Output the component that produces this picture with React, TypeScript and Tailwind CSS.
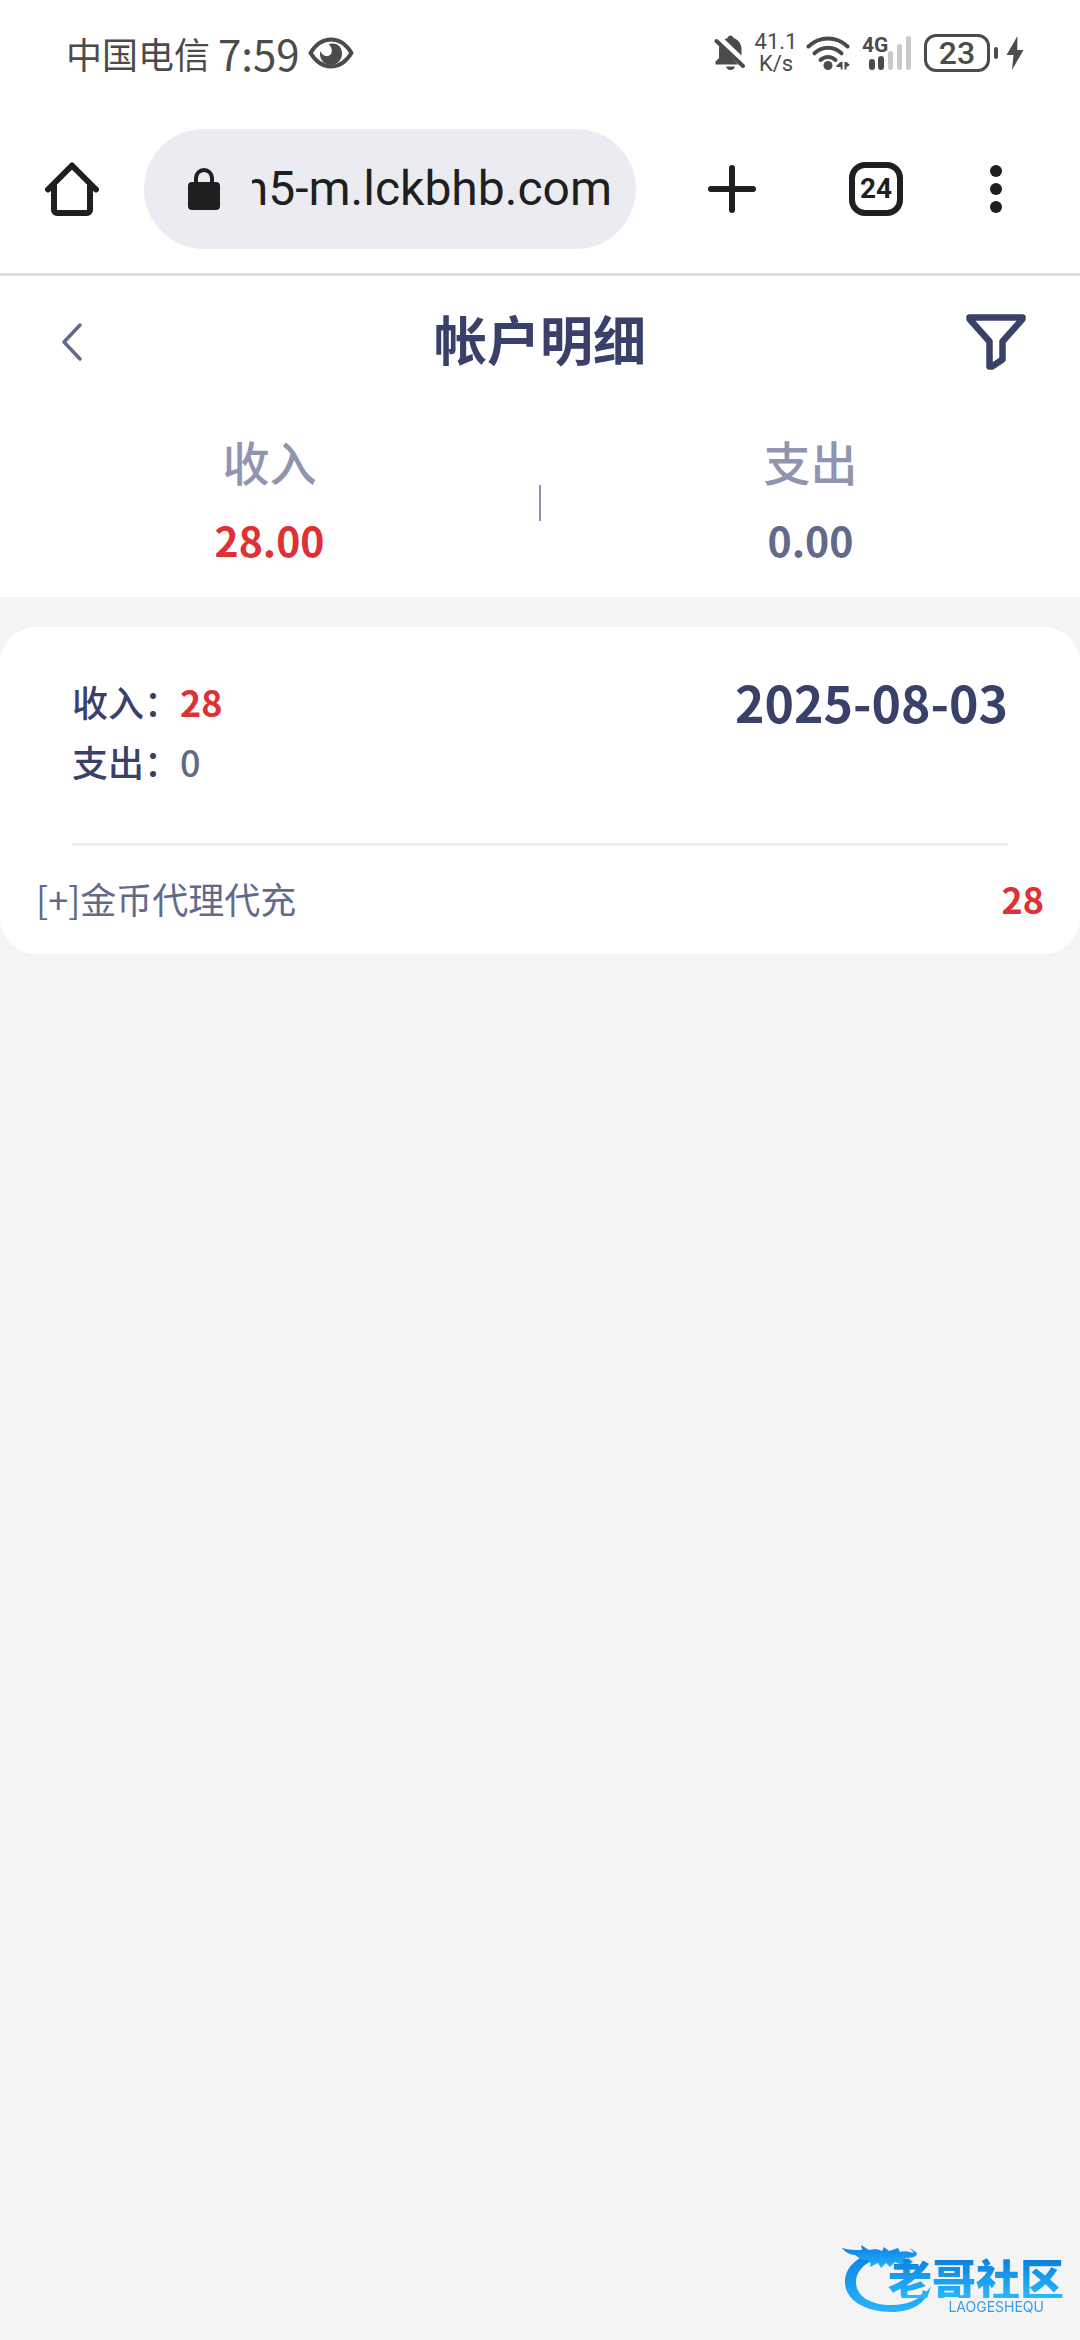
import React from "react";

interface ITotal {
  label: string;
  value: string;
  color: string;
}

interface IRecord {
  title: string;
  amount: string;
}

interface IDay {
  date: string;
  income: string;
  expense: string;
  records: IRecord[];
}

const totals: ITotal[] = [
  { label: "收入", value: "28.00", color: "text-[#df3033]" },
  { label: "支出", value: "0.00", color: "text-[#626a8b]" },
];

const days: IDay[] = [
  {
    date: "2025-08-03",
    income: "28",
    expense: "0",
    records: [{ title: "[+]金币代理代充", amount: "28" }],
  },
];

const EyeIcon = () => (
  <svg width="46" height="32" viewBox="0 0 46 32" fill="none">
    <path
      d="M2.500 16C8 7 15 2.500 23 2.500S38 7 43.500 16C38 25 31 29.500 23 29.500S8 25 2.500 16Z"
      stroke="currentColor"
      strokeWidth="4"
      strokeLinejoin="round"
    />
    <path
      d="M20.500 7.500C28 4.500 34 9.500 34 16.500c0 6.500-5 11.500-11 11.500s-11-4.500-11-11c0-1 .1-2 .4-3 1.500 4 5 6.200 8.300 4.800 4.300-1.800 4.300-8.300-.2-11.300Z"
      fill="currentColor"
    />
  </svg>
);

const MutedIcon = () => (
  <svg width="32" height="36" viewBox="0 0 32 36" fill="none">
    <path
      d="M10.500 4.200 13.500 3c.5-1.500 1.500-2.500 3-2.500s2.500 1 3 2.500c5 1.500 8 6 8 11v6.500L10.500 4.200Z"
      fill="currentColor"
    />
    <path
      d="M5.500 9.500 24 29.500H1.500v-3L5 23V15c0-2 .1-3.800.5-5.500Z"
      fill="currentColor"
    />
    <path d="M12 31.500h9c-.8 2.400-2.400 3.500-4.500 3.500s-3.700-1.100-4.500-3.500Z" fill="currentColor" />
    <path d="M2.500 6 29 31" stroke="currentColor" strokeWidth="4" strokeLinecap="round" />
  </svg>
);

const WifiIcon = () => (
  <svg width="44" height="36" viewBox="0 0 44 36" fill="none">
    <g stroke="currentColor" strokeWidth="4" strokeLinecap="round">
      <path d="M2.500 11.500C13.500.8 30.500.8 41.500 11.500" />
      <path d="M8.500 18.300c7.800-7.400 19.200-7.400 27 0" />
      <path d="M14.500 25c4.400-4 10.600-4 15 0" />
    </g>
    <circle cx="22" cy="30.500" r="4.500" fill="currentColor" />
    <path d="M36.500 27v7.500h-1.800V32H30.500v-1.500l4-3.500h2ZM38.500 27h2l3.500 3-3.500 2v2.500h-2V27Z" fill="currentColor" />
  </svg>
);

const SignalIcon = () => (
  <svg width="50" height="36" viewBox="0 0 50 36">
    <text
      x="0"
      y="17"
      fill="currentColor"
      className="font-['Roboto',sans-serif] text-[21px] font-bold"
    >
      4G
    </text>
    <rect x="7" y="24" width="6" height="11" rx="3" fill="currentColor" />
    <rect x="16" y="21" width="6" height="14" rx="3" fill="currentColor" />
    <g fill="#c9c9c9">
      <rect x="26" y="16" width="5" height="19" rx="2.500" />
      <rect x="35" y="9" width="5" height="26" rx="2.500" />
      <rect x="44" y="1" width="5" height="34" rx="2.500" />
    </g>
  </svg>
);

const BoltIcon = () => (
  <svg width="18" height="36" viewBox="0 0 18 36" fill="currentColor">
    <path d="M11.500 1 .5 20h7L6 35 17.500 15h-6.300L11.500 1Z" />
  </svg>
);

const StatusBar = () => (
  <div className="flex h-[105px] items-center justify-between pr-14 pl-[66px] text-[#4b4b4b]">
    <div className="flex items-center">
      <span className="text-[36px]">中国电信</span>
      <span className="ml-2 text-[42px]">7:59</span>
      <span className="ml-2">
        <EyeIcon />
      </span>
    </div>
    <div className="flex items-center">
      <MutedIcon />
      <div className="ml-2 flex w-11 flex-col items-center font-['Roboto',sans-serif] text-[22px] leading-[22px]">
        <span>41.1</span>
        <span>K/s</span>
      </div>
      <span className="ml-2">
        <WifiIcon />
      </span>
      <span className="ml-3">
        <SignalIcon />
      </span>
      <span className="ml-3 flex h-[38px] w-[66px] items-center justify-center rounded-xl border-3 border-current font-['Roboto',sans-serif] text-[32px] leading-8 font-medium">
        23
      </span>
      <span className="ml-1 h-3 w-1 rounded-sm bg-current" />
      <span className="ml-2">
        <BoltIcon />
      </span>
    </div>
  </div>
);

const BrowserBar = () => (
  <div className="flex h-[171px] items-center border-b-3 border-[#e0e0e0] text-[#1f1f1f]">
    <button type="button" aria-label="主页" className="flex w-36 justify-center">
      <svg width="54" height="54" viewBox="0 0 54 54" fill="none" stroke="currentColor" strokeWidth="6">
        <path d="M3 27.500 27 3.500l24 24" strokeLinecap="round" strokeLinejoin="round" />
        <path d="M9 23v25a3 3 0 0 0 3 3h30a3 3 0 0 0 3-3V23" />
      </svg>
    </button>
    <div className="flex h-[120px] min-w-0 flex-1 items-center rounded-full bg-[#ebecf1] pr-6 pl-11">
      <svg width="32" height="42" viewBox="0 0 32 42" className="shrink-0">
        <rect y="14" width="32" height="28" rx="4" fill="currentColor" />
        <path d="M8 16V10a8 8 0 0 1 16 0v6" fill="none" stroke="currentColor" strokeWidth="4" />
      </svg>
      {/* long hosts keep their end visible */}
      <div className="ml-8 flex min-w-0 flex-1 justify-end overflow-hidden font-['Roboto',sans-serif] text-[48px] leading-[72px] whitespace-nowrap">
        <span>h5-m.lckbhb.com</span>
      </div>
    </div>
    <button type="button" aria-label="新标签页" className="ml-6 flex w-36 justify-center">
      <svg width="48" height="48" viewBox="0 0 48 48" stroke="currentColor" strokeWidth="6" strokeLinecap="round">
        <path d="M24 3v42M3 24h42" />
      </svg>
    </button>
    <button type="button" className="flex w-36 justify-center">
      <span className="flex size-[54px] items-center justify-center rounded-2xl border-6 border-current font-['Roboto',sans-serif] text-[28px] leading-8 font-bold">
        24
      </span>
    </button>
    <button type="button" aria-label="菜单" className="mr-9 flex w-24 justify-center">
      <svg width="12" height="48" viewBox="0 0 12 48" fill="currentColor">
        <circle cx="6" cy="6" r="6" />
        <circle cx="6" cy="24" r="6" />
        <circle cx="6" cy="42" r="6" />
      </svg>
    </button>
  </div>
);

const PageHeader = () => (
  <header className="flex h-[132px] items-center justify-between pr-[54px] pl-[60px]">
    <button type="button" aria-label="返回" className="flex w-[54px]">
      <svg width="24" height="40" viewBox="0 0 24 40" fill="none">
        <path
          d="M20 3 4 20l16 17"
          stroke="#626a8b"
          strokeWidth="3.500"
          strokeLinecap="round"
          strokeLinejoin="round"
        />
      </svg>
    </button>
    <h1 className="pb-2 text-[53px] leading-[72px] font-bold text-[#394069]">帐户明细</h1>
    <button type="button" aria-label="筛选" className="text-[#394069]">
      <svg width="60" height="58" viewBox="0 0 60 58" fill="none">
        <path
          d="M3.500 4.500h53v1.500L36.500 28.500V46.500L26 53.500h-2.500V28.500L3.500 6V4.500Z"
          stroke="currentColor"
          strokeWidth="6.500"
          strokeLinejoin="round"
        />
      </svg>
    </button>
  </header>
);

const Summary = () => (
  <section className="flex h-[189px] items-center">
    {totals.map(({ label, value, color }, index) => (
      <React.Fragment key={label}>
        {index > 0 && <span className="h-9 w-0.5 bg-[#8f92ac]" />}
        <div className="flex flex-1 flex-col items-center">
          <span className="text-[47px] leading-[72px] font-medium text-[#9094b0]">{label}</span>
          <span className={`text-[41px] leading-[84px] font-bold ${color}`}>{value}</span>
        </div>
      </React.Fragment>
    ))}
  </section>
);

const DayCard = ({ date, income, expense, records }: IDay) => (
  <article className="rounded-[36px] bg-white">
    <div className="mx-18 flex items-start justify-between border-b-3 border-[#ededf0] pt-11 pb-[52px]">
      <div className="text-[36px] leading-[60px] font-medium text-[#394069]">
        <p>
          收入：<span className="font-bold text-[#df3033]">{income}</span>
        </p>
        <p>
          支出：<span className="text-[#626a8b]">{expense}</span>
        </p>
      </div>
      <time className="text-[50px] leading-[60px] font-bold text-[#394069]">{date}</time>
    </div>
    <ul>
      {records.map(({ title, amount }) => (
        <li key={title} className="flex h-[108px] items-center justify-between px-9 pb-1 text-[36px] text-[#626a8b]">
          <span>{title}</span>
          <span className="font-bold text-[#df3033]">{amount}</span>
        </li>
      ))}
    </ul>
  </article>
);

const Watermark = () => (
  <div className="fixed right-4 bottom-6 flex h-[76px] w-[222px] flex-col items-end">
    <svg width="222" height="76" viewBox="0 0 222 76" className="absolute inset-0">
      <defs>
        <linearGradient id="dragon" x1="0" y1="0" x2="0" y2="1">
          <stop offset="0" stopColor="#0a7fe0" />
          <stop offset="1" stopColor="#27b4fb" />
        </linearGradient>
      </defs>
      <g fill="url(#dragon)">
        <path d="M33 12C14 17 3 28 3 42c0 18 20 30 47 30 20 0 35-9 39-26-7 11-20 18-36 19-23 1-39-8-39-23 0-10 7-18 20-23l14-2-2-7-13 2Z" />
        <path d="M0 8c7 2 13 2 20 2l-1-5 8 5c5-1 9-1 13 1l2-4 5 4 9-3 2 4c5-2 10 0 14 1l-4-5 7 5 1-3-2 6c-4 2-8 2-12 2l9 3-3 4c-6 1-11-1-15-3l-5 5-4-4-5 5-3-5-8 4c1-4 0-6-3-7-6 1-9-3-12-5-5 0-10-3-13-7Z" />
      </g>
    </svg>
    <span className="relative mt-[18px] bg-linear-to-b from-[#0a7fe0] to-[#2ab8fc] bg-clip-text text-[44px] leading-10 font-black text-transparent">
      老哥社区
    </span>
    <span className="relative mr-5 font-['Inter',sans-serif] text-[14px] leading-[18px] text-[#3a9be6]">
      LAOGESHEQU
    </span>
  </div>
);

const App = () => {
  return (
    <div className="min-h-screen bg-[#f4f4f4] font-['Noto_Sans_CJK_SC',sans-serif]" lang="zh-CN">
      <div className="bg-white">
        <StatusBar />
        <BrowserBar />
        <PageHeader />
        <Summary />
      </div>
      <main className="mt-[30px] flex flex-col gap-[30px]">
        {days.map((day) => (
          <DayCard key={day.date} {...day} />
        ))}
      </main>
      <Watermark />
    </div>
  );
};

export default App;
